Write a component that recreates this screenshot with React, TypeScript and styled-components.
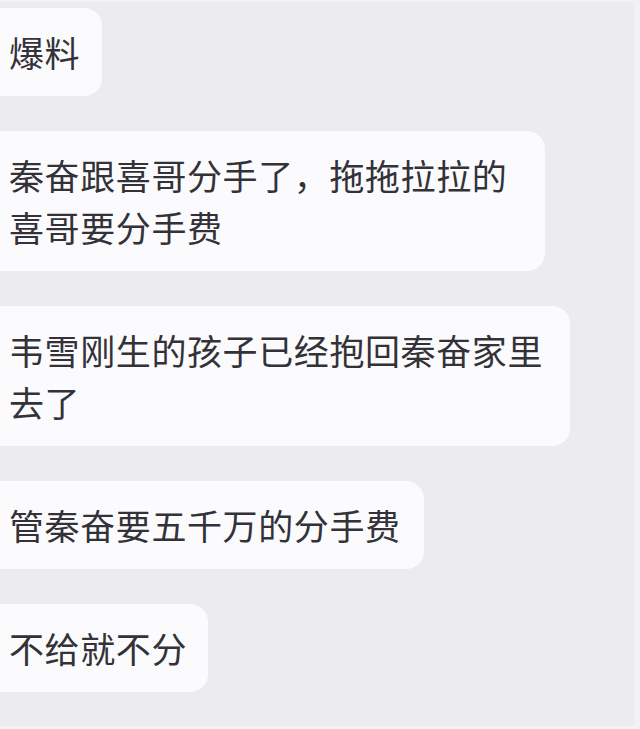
import React from "react";
import styled, { createGlobalStyle } from "styled-components";

const Global = createGlobalStyle`
  html, body { margin: 0; padding: 0; background: #ececef; }
  #root { width: 640px; }
`;

const Page = styled.div`
  box-sizing: border-box;
  width: 640px;
  height: 729px;
  overflow: hidden;
  background: #ececef;
  border-top: 2px solid #f2f2f4;
  border-right: 6px solid #f2f2f4;
  border-bottom: 3px solid #f4f4f6;
  display: flex;
  flex-direction: column;
  align-items: flex-start;
  gap: 35px;
  padding-top: 6px;
  font-family: "Noto Sans CJK SC", "Noto Sans", sans-serif;
`;

const Bubble = styled.div<{ $w: number }>`
  box-sizing: border-box;
  width: ${(p) => p.$w}px;
  background: #fbfbfd;
  border-radius: 0 18px 18px 0;
  padding: 18px 0 18px 9px;
  font-size: 35px;
  letter-spacing: 0.6px;
  line-height: 52px;
  color: #333238;
  white-space: nowrap;
`;

const messages: { w: number; lines: string[] }[] = [
  { w: 102, lines: ["爆料"] },
  { w: 545, lines: ["秦奋跟喜哥分手了，拖拖拉拉的", "喜哥要分手费"] },
  { w: 570, lines: ["韦雪刚生的孩子已经抱回秦奋家里", "去了"] },
  { w: 424, lines: ["管秦奋要五千万的分手费"] },
  { w: 208, lines: ["不给就不分"] },
];

export default function App() {
  return (
    <>
      <Global />
      <Page>
        {messages.map((m, i) => (
          <Bubble key={i} $w={m.w}>
            {m.lines.map((l, j) => (
              <React.Fragment key={j}>
                {j > 0 && <br />}
                {l}
              </React.Fragment>
            ))}
          </Bubble>
        ))}
      </Page>
    </>
  );
}
